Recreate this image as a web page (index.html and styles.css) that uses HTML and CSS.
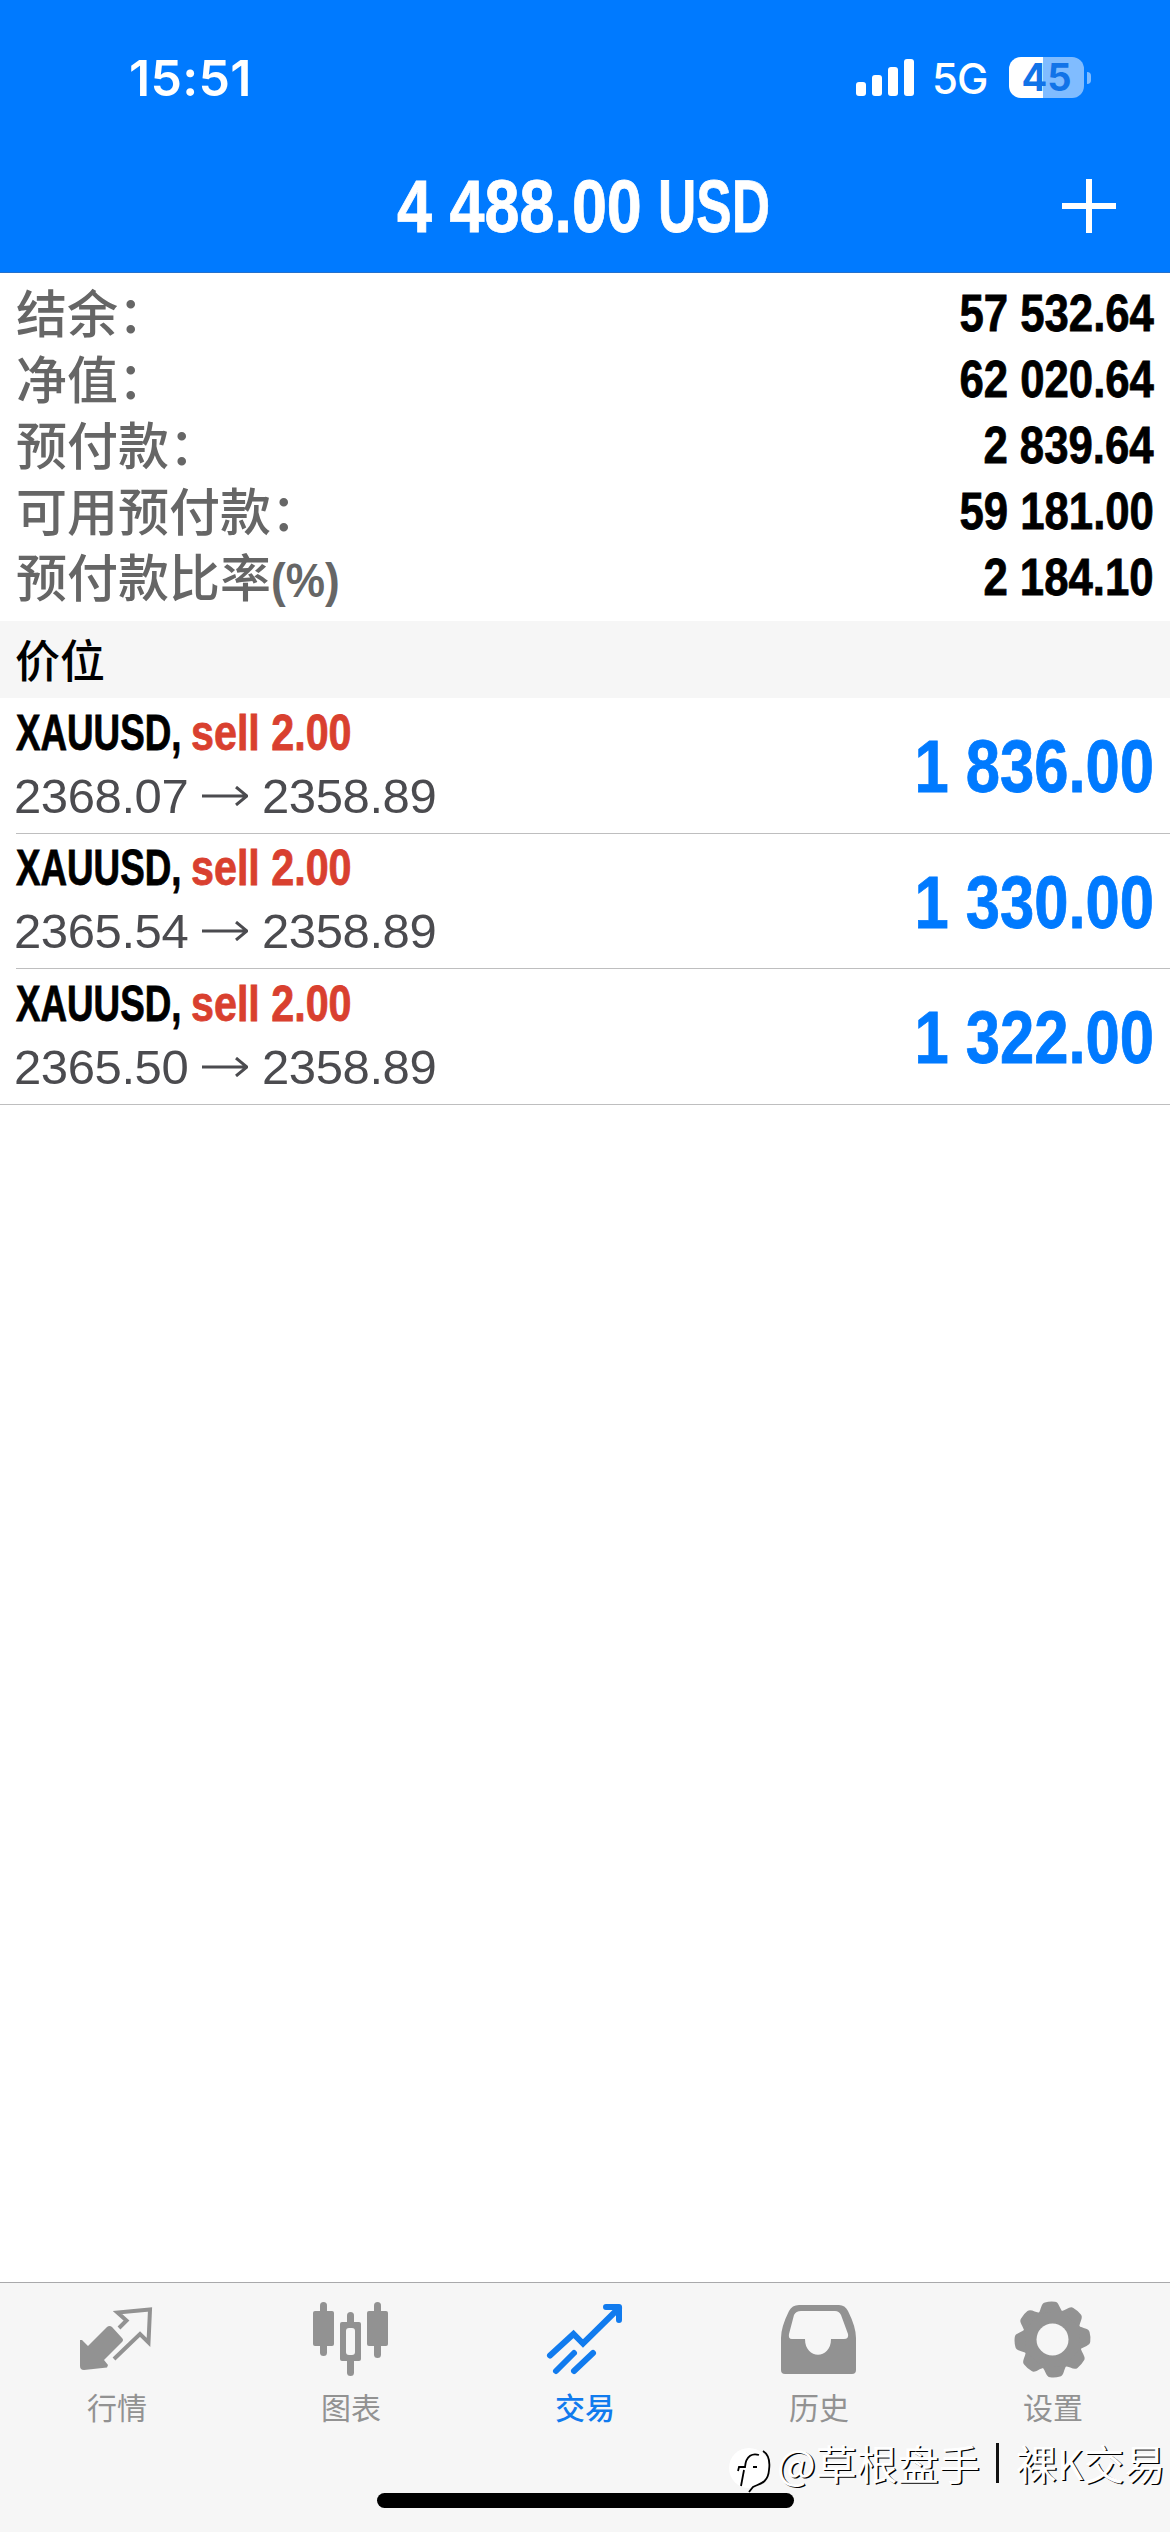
FILE: index.html
```html
<!DOCTYPE html>
<html lang="zh-CN">
<head>
<meta charset="utf-8">
<title>交易</title>
<link rel="stylesheet" href="styles.css">
</head>
<body>
<div class="screen">
  <header class="header">
    <div class="status">
      <span class="time">15:51</span>
      <div class="status-right">
        <svg class="signal" width="58" height="37" viewBox="0 0 58 37" fill="#fff"><rect x="0" y="23" width="10" height="14" rx="3"/><rect x="16" y="16" width="10" height="21" rx="3"/><rect x="32" y="8" width="10" height="29" rx="3"/><rect x="48" y="0" width="10" height="37" rx="3"/></svg>
        <span class="network">5G</span>
        <div class="battery"><span class="battery-body">45</span><i class="battery-nub"></i></div>
      </div>
    </div>
    <div class="navbar">
      <h1 class="title"><span class="cond title-sum">4 488.00</span><span class="cond title-cur">USD</span></h1>
      <svg class="plus" width="54" height="54" viewBox="0 0 54 54" stroke="#fff" stroke-width="6"><path d="M0 27H54M27 0V54"/></svg>
    </div>
  </header>

  <section class="summary">
    <div class="sum-row"><span class="label">结余：</span><span class="cond value">57 532.64</span></div>
    <div class="sum-row"><span class="label">净值：</span><span class="cond value">62 020.64</span></div>
    <div class="sum-row"><span class="label">预付款：</span><span class="cond value">2 839.64</span></div>
    <div class="sum-row"><span class="label">可用预付款：</span><span class="cond value">59 181.00</span></div>
    <div class="sum-row"><span class="label">预付款比率<span class="cond unit">(%)</span></span><span class="cond value">2 184.10</span></div>
  </section>

  <h2 class="section">价位</h2>

  <main class="positions">
    <article class="position">
      <div class="info">
        <div class="deal"><span class="cond symbol">XAUUSD,</span><span class="cond side">sell 2.00</span></div>
        <div class="prices"><span class="price">2368.07</span><svg class="arrow" width="46" height="20" viewBox="0 0 46 20"><path d="M0 10H45M34 1L45 10L34 19"/></svg><span class="price">2358.89</span></div>
      </div>
      <span class="cond profit">1 836.00</span>
    </article>
    <article class="position">
      <div class="info">
        <div class="deal"><span class="cond symbol">XAUUSD,</span><span class="cond side">sell 2.00</span></div>
        <div class="prices"><span class="price">2365.54</span><svg class="arrow" width="46" height="20" viewBox="0 0 46 20"><path d="M0 10H45M34 1L45 10L34 19"/></svg><span class="price">2358.89</span></div>
      </div>
      <span class="cond profit">1 330.00</span>
    </article>
    <article class="position">
      <div class="info">
        <div class="deal"><span class="cond symbol">XAUUSD,</span><span class="cond side">sell 2.00</span></div>
        <div class="prices"><span class="price">2365.50</span><svg class="arrow" width="46" height="20" viewBox="0 0 46 20"><path d="M0 10H45M34 1L45 10L34 19"/></svg><span class="price">2358.89</span></div>
      </div>
      <span class="cond profit">1 322.00</span>
    </article>
  </main>

  <footer class="tabbar">
    <nav class="tabs">
      <a class="tab"><svg class="icon" width="78" height="78" viewBox="0 0 78 78"><path fill="#929292" d="M2 40V66Q2 70 6 70L29 67.500 30 65 26 60 44 42Q46 40 44 38L34 27Q31.500 25 29 27L10 46 4 40Z"/><path fill="none" stroke="#929292" stroke-width="4" d="M41 28 48.500 20.500 39.500 12.500 72 9.500 70.500 42.500 62 34 36 59"/></svg><span class="tab-label">行情</span></a>
      <a class="tab"><svg class="icon" width="78" height="78" viewBox="0 0 78 78" fill="#929292"><rect x="8" y="2" width="7" height="54" rx="3.500"/><rect x="1" y="11" width="21" height="35" rx="2"/><rect x="62" y="2" width="7" height="56" rx="3.500"/><rect x="55" y="11" width="21" height="35" rx="2"/><rect x="35" y="12" width="7" height="64" rx="3.500"/><rect x="28" y="22" width="21" height="39" rx="2"/><rect x="34" y="28" width="9" height="27" rx="3" fill="#f6f6f6"/></svg><span class="tab-label">图表</span></a>
      <a class="tab active"><svg class="icon" width="78" height="78" viewBox="0 0 78 78" fill="none" stroke="#117bee" stroke-width="6" stroke-linecap="round" stroke-linejoin="miter"><path d="M4 55.500 27.500 34 37 43.500 73 8"/><path d="M60 7H73V20" stroke-linejoin="round"/><path d="M10 71 28 53M28 71 47 53"/></svg><span class="tab-label">交易</span></a>
      <a class="tab"><svg class="icon" width="78" height="78" viewBox="0 0 78 78"><path fill="#929292" fill-rule="evenodd" d="M19 5H59Q65 5 68 11 76 27 76 38V70Q76 74 72 74H5Q1 74 1 70V38Q1 27 9 11 12 5 19 5ZM21 11Q16 11 14 15L9 34Q8 39 12 39H25C25 60 51 60 51 39H64Q69 39 68 34L61 15Q59 11 55 11Z"/></svg><span class="tab-label">历史</span></a>
      <a class="tab"><svg class="icon" width="78" height="78" viewBox="0 0 78 78"><g fill="#929292" transform="translate(38.500 39.500)"><circle r="30"/><g transform="rotate(-4)"><path id="tooth" d="M-12-27C-9-31-9-37-5-37.500Q0-38.500 5-37.500C9-37 9-31 12-27Z"/><use href="#tooth" transform="rotate(45)"/><use href="#tooth" transform="rotate(90)"/><use href="#tooth" transform="rotate(135)"/><use href="#tooth" transform="rotate(180)"/><use href="#tooth" transform="rotate(225)"/><use href="#tooth" transform="rotate(270)"/><use href="#tooth" transform="rotate(315)"/></g><circle r="16" fill="#f6f6f6"/></g></svg><span class="tab-label">设置</span></a>
    </nav>
    <div class="home"></div>
    <div class="watermark">
      <svg width="44" height="50" viewBox="0 0 44 50"><circle cx="20" cy="22" r="20" fill="#fff"/><g fill="none" stroke="#000" stroke-width="1.800"><path d="M34 5Q42 10 40 24C39 38 29 38 24 41L20 46"/><path d="M12 40 15 24M9 25 10 21 16 21C17 9 24 7 30 9M24 21H28"/></g></svg>
      <span class="mark-text">@草根盘手<i class="bar"></i><span>裸K交易</span></span>
    </div>
  </footer>
</div>
</body>
</html>
```
FILE: styles.css
```css
* { box-sizing: border-box; }
body { margin: 0; background: #fff; }
.screen {
  width: 1170px; height: 2532px; display: flex; flex-direction: column; overflow: hidden;
  background: #fff; color: #000;
  font-family: "Liberation Sans", "Noto Sans CJK SC", sans-serif;
}
h1, h2 { margin: 0; }

/* Condensed bold numerals and symbols */
.cond { display: inline-block; font-weight: 700; white-space: nowrap; transform-origin: 0 50%; -webkit-text-stroke: .8px currentColor; }

.header { height: 273px; background: #007aff; color: #fff; border-bottom: 1px solid #2571cc; }
.status { height: 137px; padding: 18px 79px 0 129px; display: flex; justify-content: space-between; align-items: center; }
.time { font: 600 50px/60px Inter, sans-serif; letter-spacing: .3px; }
.status-right { display: flex; align-items: center; }
.network { font: 500 42px/50px Inter, sans-serif; width: 75px; padding-left: 18px; margin-top: 3px; letter-spacing: -1px; }
.battery { display: flex; align-items: center; gap: 3px; margin-left: 20px; }
.battery-body {
  width: 75px; height: 41px; border-radius: 12px; text-align: center;
  background: linear-gradient(90deg, #fff 34px, #80bcff 34px);
  color: #1173e8; font: 700 38px/41px Inter, sans-serif;
}
.battery-nub { width: 4px; height: 12px; background: #80bcff; border-radius: 0 4px 4px 0; }
.navbar { height: 135px; display: grid; grid-template-columns: 1fr 376px 1fr; padding: 0 54px; align-items: center; }
.title { grid-column: 2; display: flex; font-size: 74px; line-height: 84px; padding-top: 5px; }
.title-sum { width: 261px; transform: scaleX(.85); }
.title-cur { width: 112px; transform: scaleX(.717); }
.plus { justify-self: end; margin-top: 2px; }

.summary { height: 348px; padding: 7px 16px 0; }
.sum-row { height: 66px; display: flex; justify-content: space-between; align-items: center; line-height: 66px; }
.label { height: 66px; margin-top: -4px; color: #666; font-size: 51px; font-weight: 500; font-family: "Noto Sans CJK SC", sans-serif; white-space: nowrap; }
.unit { font-family: "Liberation Sans", sans-serif; line-height: 60px; transform: scaleX(.9); font-size: 49px; -webkit-text-stroke: 0; }
.value { font-size: 51px; transform-origin: 100% 50%; transform: translateY(1px) scaleX(.857); }

.section { height: 77px; padding-left: 15px; background: #f6f6f6; font: 500 45px/76px "Noto Sans CJK SC", sans-serif; }

.positions { flex: 1; }
.position { height: 135px; margin-left: 16px; padding-right: 16px; border-bottom: 1px solid #bebebf; display: flex; justify-content: space-between; align-items: center; }
.position:first-child { height: 136px; }
.position:last-child { height: 136px; margin-left: 0; padding-left: 16px; }
.info { display: flex; flex-direction: column; padding-bottom: 2px; }
.deal { display: flex; height: 62px; font-size: 50px; line-height: 62px; }
.symbol { width: 175px; transform: scaleX(.735); }
.side { color: #d9402f; transform: scaleX(.825); }
.prices { display: flex; align-items: center; height: 64px; font-size: 49px; line-height: 64px; color: #4b4b4f; }
.price { width: 171px; letter-spacing: -.400px; margin-left: -2px; }
.arrow { margin: 0 16px 0 17px; fill: none; stroke: #4b4b4f; stroke-width: 3; }
.profit { padding-top: 3px; font-size: 74px; line-height: 84px; color: #007aff; transform-origin: 100% 50%; transform: scaleX(.832); }

.tabbar { position: relative; height: 250px; background: #f6f6f6; border-top: 1px solid #a9a9ab; }
.tabs { display: grid; grid-template-columns: repeat(5, 1fr); height: 150px; }
.tab { display: flex; flex-direction: column; align-items: center; padding-top: 17px; color: #929292; }
.icon { display: block; }
.tab-label { margin-top: 6px; font: 400 30px/44px "Noto Sans CJK SC", sans-serif; }
.active { color: #117bee; }
.active .tab-label { font-weight: 500; }
.home { width: 417px; height: 15px; margin: 60px auto 0; border-radius: 8px; background: #000; }
.watermark { position: absolute; left: 729px; top: 163px; display: flex; gap: 4px; }
.mark-text {
  display: flex; align-items: center; height: 38px; margin-top: -3px; color: #fff; white-space: nowrap;
  font: 400 41px/38px "Noto Sans CJK SC", sans-serif; text-shadow: 1.5px 1px 0 #000;
}
.bar { width: 3px; height: 40px; margin: 2px 17px 0 16px; background: #111; }
```
